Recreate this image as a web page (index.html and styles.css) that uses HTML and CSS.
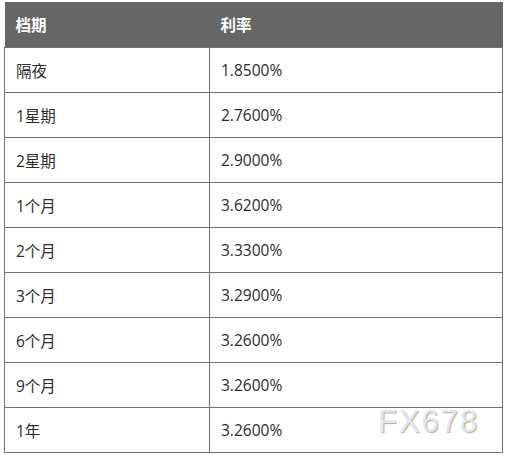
FILE: index.html
```html
<!DOCTYPE html>
<html lang="zh-CN">
<head>
<meta charset="utf-8">
<link rel="stylesheet" href="styles.css">
</head>
<body>
<div class="wrap">
<table class="rates">
<thead>
<tr><th class="c1">档期</th><th>利率</th></tr>
</thead>
<tbody>
<tr><td>隔夜</td><td>1.8500%</td></tr>
<tr><td>1星期</td><td>2.7600%</td></tr>
<tr><td>2星期</td><td>2.9000%</td></tr>
<tr><td>1个月</td><td>3.6200%</td></tr>
<tr><td>2个月</td><td>3.3300%</td></tr>
<tr><td>3个月</td><td>3.2900%</td></tr>
<tr><td>6个月</td><td>3.2600%</td></tr>
<tr><td>9个月</td><td>3.2600%</td></tr>
<tr><td>1年</td><td>3.2600%</td></tr>
</tbody>
</table>
<div class="mark">FX678</div>
</div>
</body>
</html>
```
FILE: styles.css
```css
html, body { margin: 0; padding: 0; background: #fff; }
.wrap { position: relative; padding: 2px 0 0 4px; }
.rates {
  border-collapse: collapse;
  width: 499px;
  font-family: "Open Sans", "Noto Sans CJK SC", sans-serif;
  font-size: 15.5px;
  color: #2b2b2b;
}
.rates th, .rates td {
  height: 45px;
  padding: 0 0 0 11px;
  text-align: left;
  vertical-align: middle;
}
.rates th {
  background: #666;
  color: #fff;
  font-weight: bold;
  height: 45px;
}
.rates td { border: 1px solid #707070; height: 44px; }
.rates .c1 { width: 194px; }
.mark {
  position: absolute;
  left: 378px;
  top: 404px;
  font-family: "Liberation Sans", Arial, sans-serif;
  font-size: 31px;
  letter-spacing: 2px;
  color: #dce8f5;
  text-shadow: 1px 1px 1px #c9a98a;
}
```
